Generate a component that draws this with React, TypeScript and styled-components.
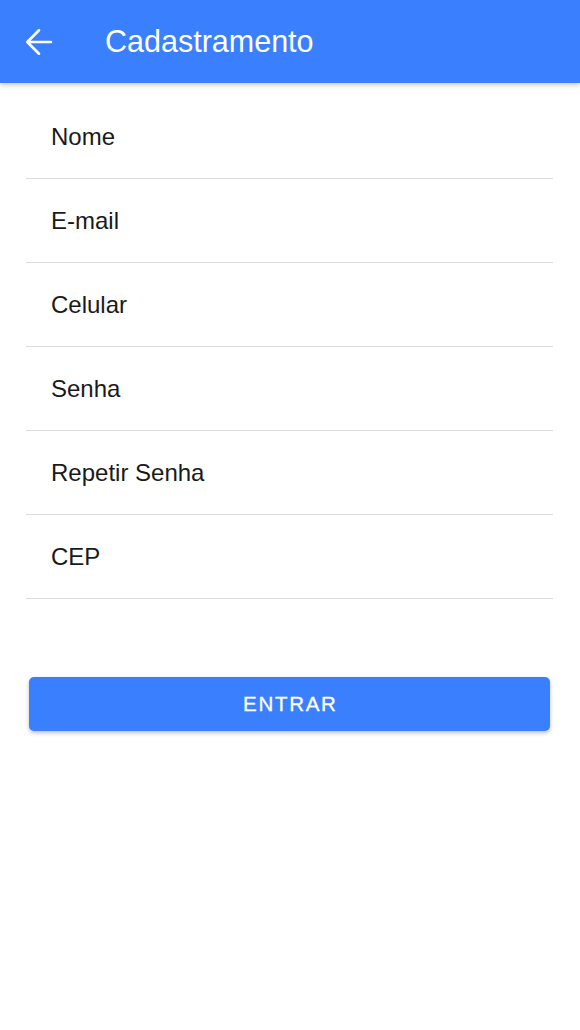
import React from "react";
import styled, { createGlobalStyle } from "styled-components";

const Global = createGlobalStyle`
  html, body { margin: 0; padding: 0; background: #fff; }
  body { font-family: "Liberation Sans", Arial, sans-serif; }
  * { box-sizing: border-box; }
`;

const Page = styled.div`
  width: 580px;
  min-height: 1030px;
  background: #fff;
  display: flex;
  flex-direction: column;
`;

const Header = styled.header`
  height: 83px;
  background: #3a80fe;
  display: flex;
  align-items: center;
  padding-left: 21px;
  box-shadow: 0 2px 5px rgba(0, 0, 0, 0.22);
  position: relative;
  z-index: 1;
`;

const BackButton = styled.button`
  width: 36px;
  height: 36px;
  padding: 0;
  border: none;
  background: transparent;
  display: flex;
  align-items: center;
  justify-content: center;
  margin-right: 48px;
  cursor: pointer;
`;

const Title = styled.h1`
  margin: 0;
  font-family: "Liberation Sans", Arial, sans-serif;
  font-weight: 400;
  font-size: 30.5px;
  color: #fff;
`;

const Form = styled.form`
  display: flex;
  flex-direction: column;
  padding: 12px 27px 0 26px;
`;

const Field = styled.label`
  height: 84px;
  display: flex;
  align-items: center;
  border-bottom: 1px solid #dcdcdc;
`;

const Input = styled.input`
  flex: 1;
  border: none;
  outline: none;
  background: transparent;
  padding: 0 0 0 25px;
  font-family: "Liberation Sans", Arial, sans-serif;
  font-size: 24px;
  color: #1a1a1a;
  &::placeholder { color: #1a1a1a; opacity: 1; }
`;

const Actions = styled.div`
  padding: 78px 30px 0 29px;
`;

const SubmitButton = styled.button`
  width: 100%;
  height: 54px;
  border: none;
  border-radius: 5px;
  background: #3a80fe;
  color: #fff;
  font-family: "Liberation Sans", Arial, sans-serif;
  font-size: 20.5px;
  font-weight: 400;
  letter-spacing: 1.7px;
  text-indent: 1.7px;
  -webkit-text-stroke: 0.3px #fff;
  box-shadow: 0 2px 4px rgba(0, 0, 0, 0.25);
  cursor: pointer;
`;

const fields = ["Nome", "E-mail", "Celular", "Senha", "Repetir Senha", "CEP"];

export default function App() {
  return (
    <Page>
      <Global />
      <Header>
        <BackButton aria-label="Voltar">
          <svg width="36" height="36" viewBox="0 0 24 24" fill="none">
            <path
              d="M20 12H4.6M12 4.2L4.2 12l7.8 7.8"
              stroke="#fff"
              strokeWidth="1.75"
              strokeLinecap="round"
              strokeLinejoin="round"
            />
          </svg>
        </BackButton>
        <Title>Cadastramento</Title>
      </Header>
      <Form onSubmit={(e) => e.preventDefault()}>
        {fields.map((f) => (
          <Field key={f}>
            <Input placeholder={f} type={f.includes("Senha") ? "password" : "text"} />
          </Field>
        ))}
      </Form>
      <Actions>
        <SubmitButton type="button">ENTRAR</SubmitButton>
      </Actions>
    </Page>
  );
}
